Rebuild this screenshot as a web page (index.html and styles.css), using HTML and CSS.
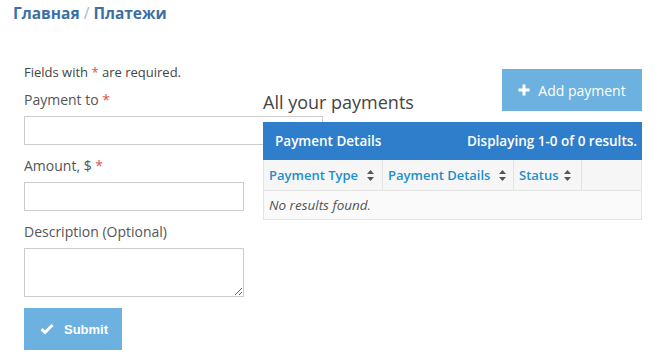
FILE: index.html
```html
<!DOCTYPE html>
<html lang="ru">
<head>
    <meta charset="UTF-8">
    <meta name="viewport" content="width=device-width, initial-scale=1.0">
    <title>Платежи</title>
    <link rel="stylesheet" href="styles.css">
</head>
<body>
    <div class="breadcrumbs">
        <a href="#">Главная</a> <span class="sep">/</span> <a href="#">Платежи</a>
    </div>

    <div class="page">
        <form class="payment-form">
            <p class="note">Fields with <span class="required">*</span> are required.</p>

            <div class="row">
                <label for="pay-to">Payment to <span class="required">*</span></label>
                <input type="text" id="pay-to" class="wide">
            </div>

            <div class="row">
                <label for="amount">Amount, $ <span class="required">*</span></label>
                <input type="text" id="amount">
            </div>

            <div class="row">
                <label for="descr">Description (Optional)</label>
                <textarea id="descr"></textarea>
            </div>

            <button type="button" class="btn submit-btn">
                <svg width="14" height="12" viewBox="0 0 14 12"><path d="M1.5 6.2 L5 9.5 L12.5 2" fill="none" stroke="#fff" stroke-width="3"/></svg>
                Submit
            </button>
        </form>

        <div class="payments">
            <div class="payments-top">
                <h2>All your payments</h2>
                <button type="button" class="btn add-btn">
                    <svg width="12" height="12" viewBox="0 0 12 12"><path d="M6 0.5 V11.5 M0.5 6 H11.5" stroke="#fff" stroke-width="3"/></svg>
                    Add payment
                </button>
            </div>

            <div class="panel">
                <div class="panel-head">
                    <span>Payment Details</span>
                    <span>Displaying 1-0 of 0 results.</span>
                </div>
                <table class="grid">
                    <thead>
                        <tr>
                            <th class="col-type"><a href="#">Payment Type</a><svg class="sort" width="7" height="11" viewBox="0 0 7 11"><path d="M3.5 0 L7 4 H0 Z M3.5 11 L7 7 H0 Z"/></svg></th>
                            <th class="col-details"><a href="#">Payment Details</a><svg class="sort" width="7" height="11" viewBox="0 0 7 11"><path d="M3.5 0 L7 4 H0 Z M3.5 11 L7 7 H0 Z"/></svg></th>
                            <th class="col-status"><a href="#">Status</a><svg class="sort status-sort" width="7" height="11" viewBox="0 0 7 11"><path d="M3.5 0 L7 4 H0 Z M3.5 11 L7 7 H0 Z"/></svg></th>
                            <th></th>
                        </tr>
                    </thead>
                    <tbody>
                        <tr>
                            <td colspan="4" class="empty">No results found.</td>
                        </tr>
                    </tbody>
                </table>
            </div>
        </div>
    </div>
</body>
</html>
```

FILE: styles.css
```css
body {
    margin: 0;
    font-family: 'Open Sans', 'Liberation Sans', Arial, sans-serif;
    color: #444;
    background: #fff;
}
a {
    text-decoration: none;
}
.breadcrumbs {
    padding: 3px 13px 5px;
    font-size: 15.5px;
    font-weight: bold;
    line-height: 20px;
}
.breadcrumbs a {
    color: #3c6fa5;
}
.breadcrumbs .sep {
    color: #a9b6c4;
    font-weight: normal;
}

.page {
    display: flex;
    gap: 19px;
    padding: 35px 29px 0 24px;
}

.payment-form {
    width: 220px;
    flex: none;
}
.note {
    margin: 0 0 9px;
    font-size: 13px;
    line-height: 18px;
    color: #444;
}
.required {
    color: #d9534f;
}
.row {
    margin-bottom: 11px;
}
.row label {
    display: block;
    font-size: 14px;
    line-height: 20px;
    margin-bottom: 6px;
    color: #555;
}
.row input,
.row textarea {
    display: block;
    box-sizing: border-box;
    width: 220px;
    height: 29px;
    margin: 0;
    border: 1px solid #ccc;
    font-family: inherit;
    font-size: 14px;
}
.row input.wide {
    width: 299px;
    margin-top: 1px;
}
.row textarea {
    height: 49px;
    resize: both;
}

.btn {
    display: inline-flex;
    align-items: center;
    justify-content: center;
    gap: 8px;
    border: none;
    background: #6cb1e0;
    color: #fff;
    font-size: 14px;
    cursor: pointer;
}
.submit-btn {
    width: 98px;
    height: 42px;
    font-family: 'Liberation Sans', Arial, sans-serif;
    font-weight: bold;
    font-size: 13px;
    gap: 10px;
    padding-right: 4px;
}
.add-btn {
    width: 140px;
    height: 42px;
    font-family: 'Open Sans', sans-serif;
}

.payments {
    position: relative;
    width: 379px;
    flex: none;
}
.payments-top {
    display: flex;
    justify-content: space-between;
    align-items: flex-end;
    margin-top: 6px;
    margin-bottom: 11px;
}
.payments-top h2 {
    margin: 0 0 -3px;
    font-size: 18px;
    font-weight: normal;
    line-height: 24px;
    color: #444;
}

.panel-head {
    display: flex;
    justify-content: space-between;
    align-items: center;
    height: 38px;
    padding: 0 5px 0 12px;
    background: #2f7ecb;
    color: #fff;
    font-size: 13.5px;
    font-weight: 600;
}
.grid {
    width: 100%;
    border-collapse: collapse;
    table-layout: fixed;
    font-size: 13px;
    border: 1px solid #e4e4e4;
    border-top: none;
}
.grid th {
    height: 30px;
    padding: 0 5px;
    text-align: left;
    font-weight: 600;
    background: #f6f6f6;
    border-right: 1px solid #e4e4e4;
    border-bottom: 1px solid #e4e4e4;
    white-space: nowrap;
}
.grid th a {
    color: #1d8fcc;
}
.col-type { width: 108px; }
.col-details { width: 120px; }
.col-status { width: 57px; }
.sort {
    margin-left: 9px;
    vertical-align: -1px;
    fill: #555;
}
.status-sort {
    margin-left: 5px;
}
.grid td.empty {
    height: 28px;
    padding: 0 5px;
    font-size: 13.5px;
    font-style: italic;
    color: #555;
    background: #fafafa;
}
```
